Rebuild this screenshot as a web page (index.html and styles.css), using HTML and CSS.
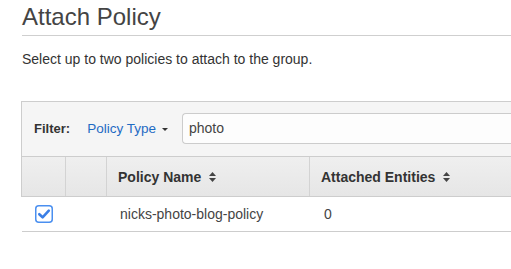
FILE: index.html
```html
<!DOCTYPE html>
<html>
<head>
<meta charset="utf-8">
<link rel="stylesheet" href="styles.css">
</head>
<body>
<div class="page">
  <div class="title-bar"><h1 class="title">Attach Policy</h1></div>
  <p class="intro">Select up to two policies to attach to the group.</p>
  <div class="panel">
    <div class="filter-bar">
      <span class="filter-label">Filter:</span>
      <span class="filter-type">Policy Type</span>
      <span class="caret"></span>
      <div class="search">photo</div>
    </div>
    <div class="grid head">
      <div class="cell c1"></div>
      <div class="cell c2"></div>
      <div class="cell c3 th">Policy Name <svg class="sort" width="7" height="10" viewBox="0 0 7 10"><path d="M3.5 0 L7 4 L0 4 Z M0 6 L7 6 L3.5 10 Z" fill="#444"/></svg></div>
      <div class="cell c4 th">Attached Entities <svg class="sort" width="7" height="10" viewBox="0 0 7 10"><path d="M3.5 0 L7 4 L0 4 Z M0 6 L7 6 L3.5 10 Z" fill="#444"/></svg></div>
    </div>
    <div class="grid row">
      <div class="cell c1 chk-cell">
        <svg class="chk" width="18" height="18" viewBox="0 0 18 18"><rect x="0.75" y="0.75" width="16.5" height="16.5" rx="3" fill="#fff" stroke="#4a8ff0" stroke-width="1.5"/><path d="M4.3 9.2 L7.6 12.3 L13.8 5.6" fill="none" stroke="#3b7fe6" stroke-width="2.6" stroke-linecap="round" stroke-linejoin="round"/></svg>
      </div>
      <div class="cell c2"></div>
      <div class="cell c3 td">nicks-photo-blog-policy</div>
      <div class="cell c4 td">0</div>
    </div>
  </div>
</div>
</body>
</html>
```
FILE: styles.css
```css
html, body {
  margin: 0;
  padding: 0;
  background: #fff;
  overflow: hidden;
}
body {
  font-family: "Liberation Sans", Arial, Helvetica, sans-serif;
  color: #444;
}
.page {
  margin-left: 22px;
  width: 620px;
}
.title-bar {
  padding-top: 3px;
  padding-bottom: 4px;
  border-bottom: 1px solid #cfcfcf;
}
.title {
  margin: 0;
  font-size: 24px;
  line-height: 28px;
  font-weight: normal;
  color: #444;
}
.intro {
  margin: 15px 0 0;
  font-size: 14px;
  line-height: 16px;
  color: #333;
}
.panel {
  margin-top: 34px;
  margin-left: -1px;
}
.filter-bar {
  display: flex;
  align-items: center;
  height: 31px;
  padding: 11px 0 12px 12px;
  background: #f5f5f5;
  border: 1px solid #cdcdcd;
  border-right: none;
}
.filter-label {
  font-size: 13px;
  font-weight: bold;
  color: #333;
}
.filter-type {
  margin-left: 17px;
  font-size: 13.5px;
  color: #1f6bc4;
}
.caret {
  margin-left: 6px;
  margin-top: 2px;
  width: 0;
  height: 0;
  border-left: 3px solid transparent;
  border-right: 3px solid transparent;
  border-top: 3px solid #333;
}
.search {
  margin-left: 14px;
  flex: 1;
  height: 29px;
  line-height: 29px;
  padding-left: 6px;
  font-size: 14px;
  color: #444;
  background: #fdfdfd;
  border: 1px solid #cccccc;
  border-right: none;
  border-radius: 4px 0 0 4px;
}
.grid {
  display: grid;
  grid-template-columns: 44px 41px 203px 1fr;
}
.head {
  height: 39px;
  background: linear-gradient(#efefef, #e6e6e6);
  border-left: 1px solid #cdcdcd;
  border-bottom: 1px solid #cdcdcd;
}
.head .cell {
  border-right: 1px solid #d3d3d3;
}
.head .c4 { border-right: none; }
.cell {
  display: flex;
  align-items: center;
}
.th {
  padding-left: 11px;
  font-size: 14px;
  font-weight: bold;
  color: #333;
}
.sort {
  margin-left: 8px;
}
.row {
  height: 34px;
  border-bottom: 1px solid #cdcdcd;
  margin-left: 1px;
}
.chk-cell {
  padding-left: 13px;
}
.td {
  padding-left: 12px;
  font-size: 14px;
  color: #444;
}
.row .c3 { padding-left: 13px; }
.row .c4 { padding-left: 14px; }
```
